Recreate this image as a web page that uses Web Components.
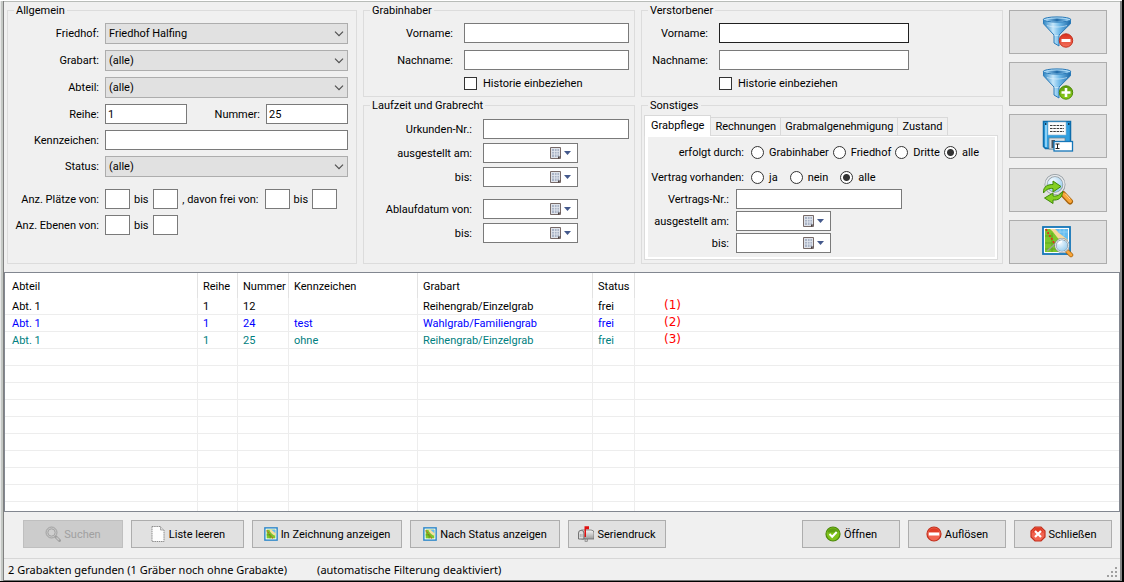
<!DOCTYPE html>
<html lang="de">
<head>
<meta charset="utf-8">
<title>Grabakten</title>
<style>
html, body { margin: 0; height: 100%; }
body { background: #f0f0f0; color: #000; font: 11px/13px Roboto, "Liberation Sans", sans-serif; }
.row { display: grid; }
.number-row { grid-template-columns: 179fr 161fr; }
.range-row { display: flex; margin-top: 6px; }
.stack { display: flex; flex-direction: column; }
.spaced { margin-top: 8px; }
</style>
</head>
<body>
<app-window>
  <filter-area slot="filter">
    <group-box slot="general" heading="Allgemein" style="--pad: 6px 8px 6px 0; --gap: 6px; --label: 91px; --label-gap: 6px">
      <select-field label="Friedhof:" value="Friedhof Halfing"></select-field>
      <select-field label="Grabart:" value="(alle)"></select-field>
      <select-field label="Abteil:" value="(alle)"></select-field>
      <div class="row number-row">
        <text-field label="Reihe:" value="1"></text-field>
        <text-field label="Nummer:" value="25" style="--label: 73px"></text-field>
      </div>
      <text-field label="Kennzeichen:"></text-field>
      <select-field label="Status:" value="(alle)"></select-field>
      <div class="range-row">
        <range-field label="Anz. Plätze von:"></range-field>
        <range-field label=", davon frei von:" style="--label: 81px"></range-field>
      </div>
      <range-field label="Anz. Ebenen von:"></range-field>
    </group-box>

    <div class="stack" slot="owner">
      <group-box heading="Grabinhaber" style="--pad: 6px 5px 6px 0; --gap: 7px; --label: 89px; --label-gap: 11px">
        <text-field label="Vorname:"></text-field>
        <text-field label="Nachname:"></text-field>
        <check-field label="Historie einbeziehen"></check-field>
      </group-box>
      <group-box grow heading="Laufzeit und Grabrecht" style="margin-top: 2px; --pad: 7px 5px 6px 0; --gap: 4px; --label: 108px; --label-gap: 11px">
        <text-field label="Urkunden-Nr.:"></text-field>
        <date-field label="ausgestellt am:"></date-field>
        <date-field label="bis:"></date-field>
        <date-field class="spaced" label="Ablaufdatum von:"></date-field>
        <date-field label="bis:"></date-field>
      </group-box>
    </div>

    <div class="stack" slot="deceased">
      <group-box heading="Verstorbener" style="--pad: 6px 93px 6px 0; --gap: 7px; --label: 66px; --label-gap: 11px">
        <text-field label="Vorname:" active></text-field>
        <text-field label="Nachname:"></text-field>
        <check-field label="Historie einbeziehen"></check-field>
      </group-box>
      <group-box grow heading="Sonstiges" style="margin-top: 2px; --pad: 3px 4px 2px 2px">
        <tab-panel tabs="Grabpflege|Rechnungen|Grabmalgenehmigung|Zustand">
          <radio-group label="erfolgt durch:" options="Grabinhaber|Friedhof|Dritte|alle" style="--label: 96px; --option-gap: 4px; margin-bottom: 3px"></radio-group>
          <radio-group label="Vertrag vorhanden:" options="ja|nein|alle" style="--label: 96px; --option-gap: 12px"></radio-group>
          <text-field label="Vertrags-Nr.:" style="--label: 81px; margin-right: 93px"></text-field>
          <date-field label="ausgestellt am:" style="--label: 81px"></date-field>
          <date-field label="bis:" style="--label: 81px"></date-field>
        </tab-panel>
      </group-box>
    </div>

    <div class="stack" slot="tools" style="gap: 8px; margin-top: 6px">
      <tool-button icon="filter-remove" label="Filter aufheben"></tool-button>
      <tool-button icon="filter-add" label="Filter setzen"></tool-button>
      <tool-button icon="save" label="Filter speichern"></tool-button>
      <tool-button icon="refresh" label="Suche aktualisieren" style="margin-top: 2px"></tool-button>
      <tool-button icon="map-search" label="Im Plan suchen"></tool-button>
    </div>
  </filter-area>

  <grave-list slot="list"></grave-list>

  <action-bar slot="actions">
    <action-button icon="search" disabled style="width: 100px">Suchen</action-button>
    <action-button icon="page" style="width: 113px">Liste leeren</action-button>
    <action-button icon="map" size="14" style="width: 150px">In Zeichnung anzeigen</action-button>
    <action-button icon="map" size="14" style="width: 150px">Nach Status anzeigen</action-button>
    <action-button icon="mailbox" style="width: 98px">Seriendruck</action-button>
    <action-button slot="end" icon="ok" style="width: 98px">Öffnen</action-button>
    <action-button slot="end" icon="minus" style="width: 98px">Auflösen</action-button>
    <action-button slot="end" icon="close" style="width: 98px">Schließen</action-button>
  </action-bar>

  <status-bar slot="status">
    <span>2 Grabakten gefunden (1 Gräber noch ohne Grabakte)</span>
    <span>(automatische Filterung deaktiviert)</span>
  </status-bar>
</app-window>

<script>
const BASE = `<style>
:host { display: block; min-width: 0; }
*, *::before { box-sizing: border-box; }
input, select, button { font: inherit; color: inherit; margin: 0; border-radius: 0; outline: 0; }
.field { display: flex; align-items: center; gap: var(--label-gap, 6px); }
.caption { flex: none; width: var(--label); text-align: right; white-space: nowrap; display: flex; justify-content: flex-end; }
.box { width: 100%; min-width: 0; height: 20px; padding: 0 2px; border: 1px solid #7a7a7a; background: #fff; }
</style>`;

class Base extends HTMLElement {
  connectedCallback() {
    if (this.shadowRoot) return;
    this.attachShadow({ mode: 'open' }).innerHTML = BASE + this.render();
  }
  attr(name) { return this.getAttribute(name) || ''; }
}

const FUNNEL = `
  <defs>
    <linearGradient id="f" x1="0" x2="1"><stop offset="0" stop-color="#2f86c4"/><stop offset=".35" stop-color="#c4e6fa"/><stop offset=".6" stop-color="#6db8e8"/><stop offset="1" stop-color="#1d68a6"/></linearGradient>
    <linearGradient id="r" x1="0" x2="1"><stop offset="0" stop-color="#9fd3f3"/><stop offset=".5" stop-color="#1f6aa8"/><stop offset="1" stop-color="#8cc8ee"/></linearGradient>
    <linearGradient id="red" y2="1" x2="0"><stop offset="0" stop-color="#d9301c"/><stop offset="1" stop-color="#f4705c"/></linearGradient>
    <linearGradient id="grn" y2="1" x2="0"><stop offset="0" stop-color="#5b9a0b"/><stop offset="1" stop-color="#8fd01a"/></linearGradient>
  </defs>
  <path d="M1.500 3v4.800L12 19v8l5 3V19L28.500 7.800V3z" fill="url(#f)" stroke="#2a7ab8"/>
  <path d="M5 9.500c6 2 14 2 20 0M12.500 19.500h4" stroke="#e4f4fd" opacity=".6" fill="none"/>
  <ellipse cx="15" cy="3.500" rx="13.700" ry="2.600" fill="#a9d7f4" stroke="#2a7ab8"/>
  <ellipse cx="15" cy="4" rx="11" ry="1.400" fill="url(#r)"/>`;

const MAP = `
  <rect x="1" y="1" width="27" height="27" fill="#fff" stroke="#1476b8" stroke-width="1.800"/>
  <rect x="3" y="3" width="23" height="23" fill="#7cc62c"/>
  <path d="M8 3c4 3 6 8 10 11s5 4 8 5V3z" fill="#f6d9a0"/>
  <path d="M13 3c3 3 5 5 8 7l5 4V3z" fill="#66bdf0"/>
  <path d="M3 10h8M3 17h14M10 7v19M17 16v10M3 23h21" stroke="#5fa81c" fill="none"/>
  <path d="M18 3v4M22 3v7M16 6h10" stroke="#8fd0f5" fill="none"/>
  <path d="M4 3c2 5 5 8 7 12s3 6 8 11" stroke="#e0301c" stroke-width="1.800" stroke-dasharray="2 1.500" fill="none"/>
  <path d="M5 25l8-7" stroke="#9aa494" stroke-width="1.500"/>`;

const LENS = `
  <defs><radialGradient id="l" cx=".35" cy=".3" r=".8"><stop offset="0" stop-color="#f2faff"/><stop offset="1" stop-color="#8cc6ea"/></radialGradient></defs>`;

const ICONS = {
  'filter-remove': [32, 32, FUNNEL + `<circle cx="24" cy="24.500" r="6.700" fill="url(#red)" stroke="#c3311f"/><rect x="19.500" y="23" width="9" height="3" fill="#fff"/>`],
  'filter-add': [32, 32, FUNNEL + `<circle cx="24" cy="24.500" r="6.700" fill="url(#grn)" stroke="#4d8a0a"/><path d="M22.700 20h2.600v3.200h3.200v2.600h-3.200V29h-2.600v-3.200h-3.200v-2.600h3.200z" fill="#fff"/>`],
  save: [32, 32, `
    <path d="M1.500 1.500h27v27h-25l-2-2z" fill="#2f9fe0" stroke="#0e6dab" stroke-width="1.500"/>
    <path d="M3 3h2v24H3z" fill="#8bd0f6"/><path d="M3 3h1.500v2H3zM26 3h1.500v2H26z" fill="#123c5c"/>
    <rect x="6" y="2" width="18" height="13" fill="#fbfbfb" stroke="#8fb6d0" stroke-width=".6"/>
    <path d="M8 5.500h14M8 8.500h14M8 11.500h14" stroke="#3c3c3c" stroke-dasharray="2.500 .8"/>
    <rect x="7" y="18" width="16" height="11" fill="#d7dde2" stroke="#667f90" stroke-width=".7"/>
    <rect x="9.500" y="20" width="3.500" height="8" fill="#4a5560"/>
    <rect x="12" y="21.500" width="18.500" height="9.500" fill="#fff" stroke="#1476b8" stroke-width="1.300"/>
    <path d="M13.500 24h4M13.500 28.500h4M15.500 24v5" stroke="#222" fill="none"/>`],
  refresh: [32, 32, LENS + `
    <path d="M21 20l7 7.500" stroke="#a8650f" stroke-width="6" stroke-linecap="round"/><path d="M22 20.500l6 6.500" stroke="#f9a63a" stroke-width="4" stroke-linecap="round"/><path d="M23.500 20l4.500 5" stroke="#fdd49a"/>
    <circle cx="13" cy="10.500" r="9" fill="url(#l)" stroke="#8e969c" stroke-width="3"/><circle cx="13" cy="10.500" r="9" fill="none" stroke="#e6eaed" stroke-width="1.500"/>
    <path d="M1.500 19C1 12 6 10.500 11 10.500V7l8 5.500-8 5.500v-3.500c-4-.5-7 1-9.500 4.500z" fill="#84cf23" stroke="#3f8a0a"/>
    <path d="M20.500 17.500c0 7-5 9-9.500 8.500v3.500L2.500 24l8.500-5v3c4 .5 7-1 9.500-4.500z" fill="#84cf23" stroke="#3f8a0a"/>`],
  'map-search': [32, 32, MAP + LENS + `
    <path d="M25 25l4 4" stroke="#a8650f" stroke-width="4.500" stroke-linecap="round"/><path d="M25.500 25.500l3.500 3.500" stroke="#f9a63a" stroke-width="3" stroke-linecap="round"/>
    <circle cx="20" cy="19.500" r="6.500" fill="url(#l)" stroke="#7f8b93" stroke-width="2"/><circle cx="20" cy="19.500" r="6.500" fill="none" stroke="#eef2f4"/>
    <path d="M16.500 18a4 4 0 0 1 3.500-2.500" stroke="#fff" stroke-width="1.500" fill="none"/>`],
  map: [16, 16, `<rect x="1" y="1" width="14" height="14" fill="#fff" stroke="#2a86c8" stroke-width="1.600"/>
    <rect x="3" y="3" width="10" height="10" fill="#7cc62c"/><path d="M6 3c1 3 4 6 7 7V3z" fill="#f6dfa0"/><path d="M8.500 3l4.500 4V3z" fill="#66bdf0"/>
    <path d="M3 4l7 9" stroke="#cf4a1c" stroke-width="1.200" stroke-dasharray="1.500 1"/><path d="M3 9h4v4" stroke="#4c9612" fill="none" stroke-width=".8"/>`],
  search: [16, 16, `<circle cx="6.500" cy="6.500" r="5.500" fill="#c4c4c4" stroke="#a3a3a3"/><circle cx="6.500" cy="6.500" r="3.600" fill="#cfcfcf" stroke="#a6a6a6"/><path d="M11 11l3.500 3.500" stroke="#a0a0a0" stroke-width="3" stroke-linecap="round"/><path d="M11.500 11.500l2.500 2.500" stroke="#c9c9c9" stroke-width="1.300"/>`],
  page: [16, 16, `<path d="M2 .500h8.500L14 4v11.500H2z" fill="#fdfdfd" stroke="#8c8c8c" stroke-dasharray="1.500 .7"/><path d="M10.500.500V4H14" fill="#ddd" stroke="#9a9a9a" stroke-width=".8"/>`],
  mailbox: [16, 16, `<defs><linearGradient id="m" y2="1" x2="0"><stop offset="0" stop-color="#f7f7f7"/><stop offset="1" stop-color="#9a9a9a"/></linearGradient></defs>
    <rect x="7" y="12" width="2.500" height="3.500" fill="#c9c9c9" stroke="#777" stroke-width=".6"/>
    <path d="M3.500 4H13a3 3 0 0 1 3 3v6H3.500z" fill="url(#m)" stroke="#6c6c6c" stroke-width=".8"/>
    <path d="M.500 13V7a2.700 2.700 0 0 1 5.400 0v6z" fill="#dcdcdc" stroke="#666" stroke-width=".9"/><path d="M2.300 8v3M4 8v3" stroke="#888" stroke-width=".6"/>
    <path d="M6.500.200H11v3H8V11H6.500z" fill="#e01010"/>`],
  ok: [16, 16, `<circle cx="8" cy="8" r="7" fill="#7fc21b" stroke="#4d8a0a" stroke-width="1.200"/><path d="M2.500 6.500a5.700 5.700 0 0 1 11 0z" fill="#5e9f10"/><path d="M4.500 8l2.700 2.700L11.700 6" stroke="#fff" stroke-width="2" fill="none"/>`],
  minus: [16, 16, `<circle cx="8" cy="8" r="7" fill="#f26450" stroke="#c3311f" stroke-width="1.200"/><path d="M2.500 6.500a5.700 5.700 0 0 1 11 0z" fill="#e03c26"/><rect x="2.800" y="6.500" width="10.400" height="3" fill="#fff"/>`],
  close: [16, 16, `<path d="M5 1h6l4 4v6l-4 4H5l-4-4V5z" fill="#f26450" stroke="#c3311f" stroke-width="1.200"/><path d="M5.200 2h5.600L14 6.500H2z" fill="#e03c26"/><path d="M5 5l6 6M11 5l-6 6" stroke="#fff" stroke-width="2.200"/>`]
};

customElements.define('ui-icon', class extends Base {
  render() {
    const [w, h, body] = ICONS[this.attr('name')];
    const size = this.attr('size');
    return `<style>:host { flex: none; } svg { display: block; }</style>
      <svg width="${size}" height="${size}" viewBox="0 0 ${w} ${h}" aria-hidden="true">${body}</svg>`;
  }
});

customElements.define('app-window', class extends Base {
  render() {
    return `<style>
      :host { display: flex; flex-direction: column; min-height: 100vh; box-sizing: border-box; background: #f0f0f0; padding: 2px 4px;
        box-shadow: inset -2px 0 #000, inset 0 -1px #000, inset 0 1px #fff, inset 1px 0 #e8e8e8,
          inset 3px 0 #c4c8c4, inset 4px 0 #808080, inset -4px 0 #858585, inset 0 -2px #777, inset 0 2px #b8bcb8; }
      .list { flex: 1 1 0; min-height: 120px; display: grid; }
    </style>
    <slot name="filter"></slot><div class="list"><slot name="list"></slot></div><slot name="actions"></slot><slot name="status"></slot>`;
  }
});

customElements.define('filter-area', class extends Base {
  render() {
    return `<style>
      :host { display: grid; grid-template-columns: 350fr 272fr 362fr 98px; gap: 6px; padding: 2px 13px 8px 3px; }
      slot { display: grid; min-width: 0; }
      slot[name=tools] { align-content: start; }
    </style>
    <slot name="general"></slot><slot name="owner"></slot><slot name="deceased"></slot><slot name="tools"></slot>`;
  }
});

customElements.define('group-box', class extends Base {
  render() {
    return `<style>
      :host { display: flex; flex-direction: column; }
      :host([grow]) { flex: 1; }
      fieldset { flex: 1; margin: 0; min-width: 0; padding: 0; border: 1px solid #dcdcdc; }
      legend { margin-left: 6px; padding: 0 2px; height: 13px; }
      .body { display: flex; flex-direction: column; gap: var(--gap, 0px); padding: var(--pad); }
    </style>
    <fieldset><legend>${this.attr('heading')}</legend><div class="body"><slot></slot></div></fieldset>`;
  }
});

customElements.define('text-field', class extends Base {
  render() {
    return `<style>:host([active]) .box { border-color: #202020; }</style>
      <div class="field"><label class="caption" for="c">${this.attr('label')}</label>
      <input class="box" id="c" type="text" value="${this.attr('value')}"></div>`;
  }
});

customElements.define('select-field', class extends Base {
  render() {
    return `<style>
      .wrap { position: relative; flex: 1; min-width: 0; display: flex; }
      select { appearance: none; width: 100%; height: 21px; padding: 0 3px; border: 1px solid #adadad; background: #e1e1e1; }
      svg { position: absolute; right: 4px; top: 8px; pointer-events: none; }
    </style>
    <div class="field"><label class="caption" for="c">${this.attr('label')}</label>
      <span class="wrap"><select id="c"><option>${this.attr('value')}</option></select>
      <svg width="10" height="6" viewBox="0 0 10 6"><path d="M1 .700l4 4 4-4" fill="none" stroke="#505050" stroke-width="1.200"/></svg></span></div>`;
  }
});

customElements.define('range-field', class extends Base {
  render() {
    return `<style>.box { width: 25px; } .pair { display: flex; align-items: center; gap: 4px; }</style>
      <div class="field"><label class="caption" for="a">${this.attr('label')}</label>
      <span class="pair"><input class="box" id="a" type="text"><label for="b">bis</label><input class="box" id="b" type="text"></span></div>`;
  }
});

customElements.define('date-field', class extends Base {
  render() {
    return `<style>
      .date { display: flex; width: 95px; height: 20px; border: 1px solid #7a7a7a; background: #fff; }
      input { flex: 1; min-width: 0; border: 0; padding: 0 2px; background: none; }
      button { flex: none; display: flex; align-items: center; gap: 2px; padding: 0 6px 0 0; border: 0; background: none; }
      svg { display: block; }
    </style>
    <div class="field"><label class="caption" for="c">${this.attr('label')}</label>
      <span class="date"><input id="c" type="text"><button type="button" aria-label="Kalender öffnen">
        <svg width="12" height="13" viewBox="0 0 12 13"><path d="M.500.500h10v11h-10z" fill="#dfe3ea" stroke="#776a68"/><path d="M2 2h7v8H2z" fill="#aab4c6"/><path d="M2 4.500h7M2 7h7M4.500 2v8M7 2v8" stroke="#e4e8f0" stroke-width=".8"/><path d="M8 12V9.500h3z" fill="#4a4040"/></svg>
        <svg width="7" height="4" viewBox="0 0 7 4"><path d="M0 0h7L3.500 4z" fill="#44598c"/></svg></button></span></div>`;
  }
});

customElements.define('check-field', class extends Base {
  render() {
    return `<style>
      .check { display: flex; align-items: center; gap: 6px; padding-left: calc(var(--label) + var(--label-gap)); }
      input { appearance: none; flex: none; width: 13px; height: 13px; border: 1px solid #333; background: #fff; }
      input:checked { background: #333; }
    </style>
    <div class="check"><input type="checkbox" id="c"><label for="c">${this.attr('label')}</label></div>`;
  }
});

customElements.define('radio-group', class extends Base {
  render() {
    const options = this.attr('options').split('|');
    return `<style>
      .field { height: 20px; --label-gap: 7px; }
      .options { display: flex; gap: var(--option-gap); }
      .option { display: flex; align-items: center; gap: 5px; white-space: nowrap; }
      input { appearance: none; width: 13px; height: 13px; border: 1px solid #333; border-radius: 50%; background: #fff; }
      input:checked { background: radial-gradient(circle, #333 3px, #fff 4px); }
    </style>
    <div class="field" role="radiogroup" aria-labelledby="t"><span class="caption" id="t">${this.attr('label')}</span>
      <span class="options">${options.map((o, i) => `<span class="option"><input type="radio" name="r" id="o${i}"${i === options.length - 1 ? ' checked' : ''}><label for="o${i}">${o}</label></span>`).join('')}</span></div>`;
  }
});

customElements.define('tab-panel', class extends Base {
  render() {
    return `<style>
      [role=tablist] { display: flex; align-items: flex-end; }
      button { height: 18px; padding: 0 4px; white-space: nowrap; border: 1px solid #d9d9d9; border-width: 1px 1px 0 0; background: #f0f0f0; }
      button[aria-selected=true] { height: 21px; margin-bottom: -1px; padding: 0 6px 2px; border-width: 1px 1px 0 1px; background: #fff; position: relative; }
      .panel { border: 1px solid #dcdcdc; background: #fff; padding: 1px 2px 2px 3px; }
      .inner { display: flex; flex-direction: column; gap: 2px; padding: 5px 0 4px; background: #f0f0f0; --label-gap: 7px; }
    </style>
    <div role="tablist">${this.attr('tabs').split('|').map((t, i) => `<button type="button" role="tab" aria-selected="${i === 0}">${t}</button>`).join('')}</div>
    <div class="panel" role="tabpanel"><div class="inner"><slot></slot></div></div>`;
  }
});

customElements.define('tool-button', class extends Base {
  render() {
    return `<style>button { width: 100%; height: 44px; padding: 0; display: grid; place-items: center; border: 1px solid #adadad; background: #e1e1e1; }</style>
      <button type="button" aria-label="${this.attr('label')}"><ui-icon name="${this.attr('icon')}" size="32"></ui-icon></button>`;
  }
});

customElements.define('grave-list', class extends Base {
  render() {
    const heads = ['Abteil', 'Reihe', 'Nummer', 'Kennzeichen', 'Grabart', 'Status', ''];
    const rows = [
      ['#000', 'Abt. 1', '1', '12', '', 'Reihengrab/Einzelgrab', 'frei', '(1)'],
      ['#00f', 'Abt. 1', '1', '24', 'test', 'Wahlgrab/Familiengrab', 'frei', '(2)'],
      ['#008080', 'Abt. 1', '1', '25', 'ohne', 'Reihengrab/Einzelgrab', 'frei', '(3)']
    ];
    while (rows.length < 13) rows.push(['#000', '', '', '', '', '', '', '']);
    return `<style>
      :host { border: 1px solid #828790; background: #fff; overflow: hidden; position: relative; contain: size; }
      table { width: 100%; table-layout: fixed; border-collapse: separate; border-spacing: 0; }
      th, td { padding: 0 0 0 5px; text-align: left; font-weight: normal; white-space: nowrap; border-right: 1px solid #ededed; }
      th:first-child, td:first-child { padding-left: 7px; }
      th:last-child, td:last-child { border-right: 0; }
      th { height: 25px; padding-top: 1px; border-right-color: #e2e2e2; }
      td { height: 17px; padding-top: 1px; line-height: 15px; border-bottom: 1px solid #ededed; }
      td.note { padding-left: 29px; color: #f00; font-family: "DejaVu Sans", sans-serif; font-size: 12px; line-height: 13px; vertical-align: top; }
      .w1 { width: 193px; } .w2 { width: 40px; } .w3 { width: 51px; } .w4 { width: 129px; } .w5 { width: 175px; } .w6 { width: 42px; }
    </style>
    <table><colgroup><col class="w1"><col class="w2"><col class="w3"><col class="w4"><col class="w5"><col class="w6"><col></colgroup>
      <thead><tr>${heads.map(h => `<th>${h}</th>`).join('')}</tr></thead>
      <tbody>${rows.map(([color, ...cells]) => `<tr style="color: ${color}">${cells.map((c, i) => `<td${i === 6 ? ' class="note"' : ''}>${c}</td>`).join('')}</tr>`).join('')}</tbody></table>`;
  }
});

customElements.define('action-bar', class extends Base {
  render() {
    return `<style>
      :host { display: flex; justify-content: space-between; gap: 8px; padding: 8px 8px 10px 19px; }
      div { display: flex; gap: 8px; }
    </style>
    <div><slot></slot></div><div><slot name="end"></slot></div>`;
  }
});

customElements.define('action-button', class extends Base {
  render() {
    return `<style>
      button { width: 100%; height: 28px; padding: 0; display: flex; align-items: center; justify-content: center; gap: 3px; white-space: nowrap; border: 1px solid #adadad; background: #e1e1e1; }
      button:disabled { border-color: #bfbfbf; background: #ccc; color: #a0a0a0; }
    </style>
    <button type="button"${this.hasAttribute('disabled') ? ' disabled' : ''}><ui-icon name="${this.attr('icon')}" size="${this.attr('size') || 16}"></ui-icon><span><slot></slot></span></button>`;
  }
});

customElements.define('status-bar', class extends Base {
  render() {
    return `<style>
      :host { display: flex; align-items: center; justify-content: space-between; height: 22px; border-top: 1px solid #d7d7d7; box-sizing: border-box; padding-left: 4px; font: 11px/16px "Noto Sans", "Open Sans", sans-serif; }
      div { display: flex; gap: 30px; }
      svg { align-self: flex-end; margin: 0 2px 2px 0; }
    </style>
    <div><slot></slot></div>
    <svg width="11" height="11" viewBox="0 0 11 11" fill="#a0a0a0" aria-hidden="true"><path d="M8 0h2v2H8zM8 4h2v2H8zM4 4h2v2H4zM8 8h2v2H8zM4 8h2v2H4zM0 8h2v2H0z"/></svg>`;
  }
});
</script>
</body>
</html>
